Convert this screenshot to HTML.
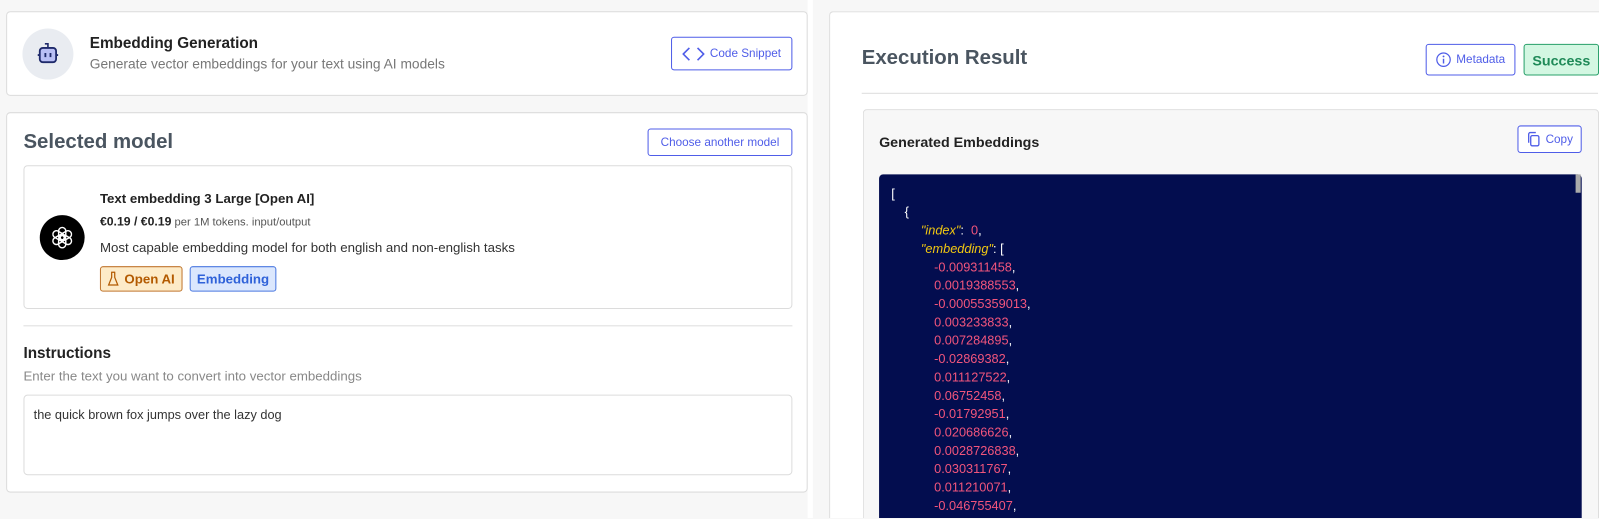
<!DOCTYPE html>
<html><head><meta charset="utf-8"><style>
*{box-sizing:border-box;margin:0;padding:0}
html,body{width:1599px;height:519px;overflow:hidden;background:#f7f7f7}
#w{position:absolute;left:0;top:0;width:1568px;height:508px;overflow:hidden;transform:scale(1.0198);transform-origin:0 0;font-family:"Liberation Sans",sans-serif;color:#222}
.abs{position:absolute}
.card{position:absolute;background:#fff;border:1px solid #dcdcdc;border-radius:4px}
.btn{position:absolute;border:1px solid #4f5de8;border-radius:3px;color:#4f5de8;font-size:11.5px;display:flex;align-items:center;justify-content:center;background:#fff;gap:5px}
.code{font-size:12.5px;line-height:18px;color:#fff}
.code div{height:18px;white-space:pre}
.k{color:#f2c811;font-style:italic}
.n{color:#f2557c}
</style></head><body><div id="w">
<div class="abs" style="left:792px;top:0;width:5px;height:508px;background:#fff"></div>

<div class="card" style="left:6px;top:11px;width:786px;height:83px"></div>
<div class="abs" style="left:22px;top:28px;width:50px;height:50px;border-radius:50%;background:#e9ecf1"></div>
<svg class="abs" style="left:33px;top:39px" width="28" height="28" viewBox="0 0 28 28">
<path d="M14 8V4h-3" fill="none" stroke="#1f2a6b" stroke-width="1.6"/>
<rect x="6" y="8" width="16" height="14" rx="3" fill="#b9bff5" stroke="#1f2a6b" stroke-width="1.8"/>
<path d="M4 15h2M22 15h2" stroke="#1f2a6b" stroke-width="1.8"/>
<path d="M11.5 13v4M16.5 13v4" stroke="#1f2a6b" stroke-width="1.8"/>
</svg>
<div class="abs" style="left:88px;top:34px;font-size:15px;font-weight:bold;color:#222">Embedding Generation</div>
<div class="abs" style="left:88px;top:55px;font-size:13.5px;color:#777">Generate vector embeddings for your text using AI models</div>
<div class="btn" style="left:658px;top:36px;width:119px;height:33px"><svg width="22" height="14" viewBox="0 0 22 14"><path d="M7 1L1 7l6 6M15 1l6 6-6 6" fill="none" stroke="#4f5de8" stroke-width="1.6"/></svg>Code Snippet</div>

<div class="card" style="left:6px;top:110px;width:786px;height:373px"></div>
<div class="abs" style="left:23px;top:128px;font-size:20px;font-weight:bold;color:#4a5560">Selected model</div>
<div class="btn" style="left:635px;top:126px;width:142px;height:27px">Choose another model</div>
<div class="card" style="left:23px;top:162px;width:754px;height:141px"></div>
<div class="abs" style="left:39px;top:211px;width:44px;height:44px;border-radius:50%;background:#000"></div>
<svg class="abs" style="left:48px;top:220px" width="26" height="26" viewBox="-13 -13 26 26">
<g fill="none" stroke="#fff" stroke-width="1.4">
<rect x="-3.5" y="-10" width="7" height="12" rx="3.5"/>
<rect x="-3.5" y="-10" width="7" height="12" rx="3.5" transform="rotate(60)"/>
<rect x="-3.5" y="-10" width="7" height="12" rx="3.5" transform="rotate(120)"/>
<rect x="-3.5" y="-10" width="7" height="12" rx="3.5" transform="rotate(180)"/>
<rect x="-3.5" y="-10" width="7" height="12" rx="3.5" transform="rotate(240)"/>
<rect x="-3.5" y="-10" width="7" height="12" rx="3.5" transform="rotate(300)"/>
</g></svg>
<div class="abs" style="left:98px;top:187px;font-size:13px;font-weight:bold;color:#222">Text embedding 3 Large [Open AI]</div>
<div class="abs" style="left:98px;top:210px;font-size:11px;color:#555"><b style="font-size:12px;color:#222">€0.19 / €0.19</b> per 1M tokens. input/output</div>
<div class="abs" style="left:98px;top:235px;font-size:13px;color:#333">Most capable embedding model for both english and non-english tasks</div>
<div class="abs" style="left:98px;top:261px;width:81px;height:25px;background:#fdebc8;border:1px solid #c0762e;border-radius:3px;color:#b35a00;font-size:13px;font-weight:bold;display:flex;align-items:center;padding-left:6px;gap:5px"><svg width="12" height="15" viewBox="0 0 12 15"><path d="M4 1h4M4.5 1v5L1.5 13.5h9L7.5 6V1" fill="none" stroke="#b35a00" stroke-width="1.2"/></svg>Open AI</div>
<div class="abs" style="left:186px;top:261px;width:85px;height:25px;background:#dbe7fd;border:1px solid #4a78e0;border-radius:3px;color:#2f62d9;font-size:13px;font-weight:bold;display:flex;align-items:center;justify-content:center">Embedding</div>
<div class="abs" style="left:23px;top:319px;width:754px;height:1px;background:#ddd"></div>
<div class="abs" style="left:23px;top:338px;font-size:15px;font-weight:bold;color:#222">Instructions</div>
<div class="abs" style="left:23px;top:361px;font-size:13px;color:#888">Enter the text you want to convert into vector embeddings</div>
<div class="card" style="left:23px;top:387px;width:754px;height:79px"></div>
<div class="abs" style="left:33px;top:400px;font-size:12.5px;color:#333">the quick brown fox jumps over the lazy dog</div>

<div class="abs" style="left:813px;top:11px;width:755px;height:497px;background:#fff;border:1px solid #dcdcdc;border-right:none;border-bottom:none;border-radius:4px 0 0 0"></div>
<div class="abs" style="left:845px;top:46px;font-size:20px;font-weight:bold;color:#4a5560">Execution Result</div>
<div class="btn" style="left:1398px;top:43px;width:88px;height:31px"><svg width="15" height="15" viewBox="0 0 16 16"><circle cx="8" cy="8" r="7" fill="none" stroke="#4f5de8" stroke-width="1.3"/><path d="M8 7v5" stroke="#4f5de8" stroke-width="1.5"/><circle cx="8" cy="4.6" r="1" fill="#4f5de8"/></svg>Metadata</div>
<div class="abs" style="left:1494px;top:43px;width:74px;height:31px;background:#d3f7e2;border:1px solid #28a06a;border-radius:3px;color:#1f8a58;font-size:14px;font-weight:bold;display:flex;align-items:center;justify-content:center">Success</div>
<div class="abs" style="left:845px;top:91px;width:722px;height:1px;background:#ddd"></div>
<div class="abs" style="left:846px;top:107px;width:722px;height:401px;background:#f7f7f7;border:1px solid #ddd;border-bottom:none;border-radius:4px 4px 0 0"></div>
<div class="abs" style="left:862px;top:131px;font-size:14px;font-weight:bold;color:#222">Generated Embeddings</div>
<div class="btn" style="left:1488px;top:123px;width:63px;height:27px"><svg width="14" height="15" viewBox="0 0 14 15"><rect x="4" y="4" width="8" height="10" rx="1.5" fill="none" stroke="#4f5de8" stroke-width="1.3"/><path d="M2 11V2.5C2 1.7 2.7 1 3.5 1H9" fill="none" stroke="#4f5de8" stroke-width="1.3"/></svg>Copy</div>
<div class="abs" style="left:862px;top:171px;width:689px;height:337px;background:#030d4f;border-radius:4px 4px 0 0"></div>
<div class="abs" style="left:1545px;top:171px;width:5px;height:18px;background:#aaa"></div>
<div class="abs code" style="left:874px;top:181px"><div>[</div><div style="padding-left:13px">{</div><div style="padding-left:29px"><span class="k">"index"</span>:  <span class="n">0</span>,</div><div style="padding-left:29px"><span class="k">"embedding"</span>: [</div><div style="padding-left:42px"><span class="n">-0.009311458</span>,</div><div style="padding-left:42px"><span class="n">0.0019388553</span>,</div><div style="padding-left:42px"><span class="n">-0.00055359013</span>,</div><div style="padding-left:42px"><span class="n">0.003233833</span>,</div><div style="padding-left:42px"><span class="n">0.007284895</span>,</div><div style="padding-left:42px"><span class="n">-0.02869382</span>,</div><div style="padding-left:42px"><span class="n">0.011127522</span>,</div><div style="padding-left:42px"><span class="n">0.06752458</span>,</div><div style="padding-left:42px"><span class="n">-0.01792951</span>,</div><div style="padding-left:42px"><span class="n">0.020686626</span>,</div><div style="padding-left:42px"><span class="n">0.0028726838</span>,</div><div style="padding-left:42px"><span class="n">0.030311767</span>,</div><div style="padding-left:42px"><span class="n">0.011210071</span>,</div><div style="padding-left:42px"><span class="n">-0.046755407</span>,</div></div>
</div></body></html>
